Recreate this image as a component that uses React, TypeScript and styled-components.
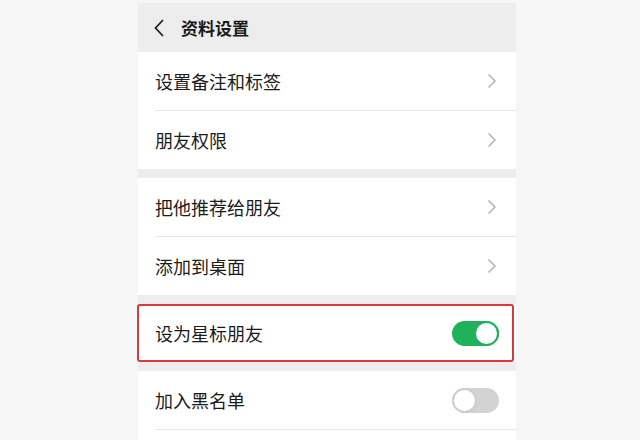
import React from "react";
import styled, { createGlobalStyle } from "styled-components";

const GlobalStyle = createGlobalStyle`
  html, body {
    margin: 0;
    padding: 0;
    background: #f6f6f6;
    font-family: "Noto Sans CJK SC", "Noto Sans", sans-serif;
  }
`;

const Page = styled.div`
  width: 640px;
  height: 440px;
  overflow: hidden;
  padding-top: 3px;
  box-sizing: border-box;
`;

const Phone = styled.div`
  width: 378px;
  margin-left: 138px;
  background: #ededed;
  display: flex;
  flex-direction: column;
  gap: 9px;
`;

const Header = styled.div`
  height: 49px;
  display: flex;
  align-items: center;
  gap: 16px;
  padding-left: 16px;
  margin-bottom: -9px;
`;

const Title = styled.span`
  font-size: 17px;
  font-weight: 700;
  color: #1a1a1a;
`;

const Section = styled.div`
  background: #fff;
  display: flex;
  flex-direction: column;
`;

const Row = styled.div<{ $highlight?: boolean }>`
  height: 58px;
  display: flex;
  align-items: center;
  justify-content: space-between;
  padding: 0 17px;
  box-sizing: border-box;
  background: #fff;
  position: relative;

  & + & {
    margin-top: 1px;
  }
  & + &::before {
    content: "";
    position: absolute;
    left: 17px;
    right: 0;
    top: -1px;
    height: 1px;
    background: #e6e6e6;
  }

  ${(p) =>
    p.$highlight &&
    `
    border: 2px solid #d63a3a;
    border-radius: 3px;
    margin-left: -1px;
    margin-right: 2px;
    padding: 0 13px 0 16px;
  `}
`;

const Label = styled.span`
  font-size: 18px;
  color: #1c1c1c;
`;

const Toggle = styled.div<{ $on?: boolean }>`
  width: 47px;
  height: 25px;
  border-radius: 13px;
  background: ${(p) => (p.$on ? "#1fb25a" : "#d3d3d3")};
  display: flex;
  align-items: center;
  justify-content: ${(p) => (p.$on ? "flex-end" : "flex-start")};
  box-sizing: border-box;

  &::after {
    content: "";
    width: 25px;
    height: 25px;
    border-radius: 50%;
    background: #fff;
    box-sizing: border-box;
    border: 2px solid ${(p) => (p.$on ? "#1fb25a" : "#cdcdcd")};
  }
`;

const Chevron = () => (
  <svg width="10" height="16" viewBox="0 0 10 16" style={{ marginRight: 2 }}>
    <path d="M1.5 1.5 L8 8 L1.5 14.5" fill="none" stroke="#b3b3b3" strokeWidth="1.5" />
  </svg>
);

const Back = () => (
  <svg width="11" height="18" viewBox="0 0 11 18">
    <path d="M9 1 L1.5 9 L9 17" fill="none" stroke="#222" strokeWidth="1.8" />
  </svg>
);

const App = () => (
  <Page>
    <GlobalStyle />
    <Phone>
      <Header>
        <Back />
        <Title>资料设置</Title>
      </Header>
      <Section>
        <Row>
          <Label>设置备注和标签</Label>
          <Chevron />
        </Row>
        <Row>
          <Label>朋友权限</Label>
          <Chevron />
        </Row>
      </Section>
      <Section>
        <Row>
          <Label>把他推荐给朋友</Label>
          <Chevron />
        </Row>
        <Row>
          <Label>添加到桌面</Label>
          <Chevron />
        </Row>
      </Section>
      <Section>
        <Row $highlight>
          <Label>设为星标朋友</Label>
          <Toggle $on />
        </Row>
      </Section>
      <Section>
        <Row>
          <Label>加入黑名单</Label>
          <Toggle />
        </Row>
        <Row />
      </Section>
    </Phone>
  </Page>
);

export default App;
